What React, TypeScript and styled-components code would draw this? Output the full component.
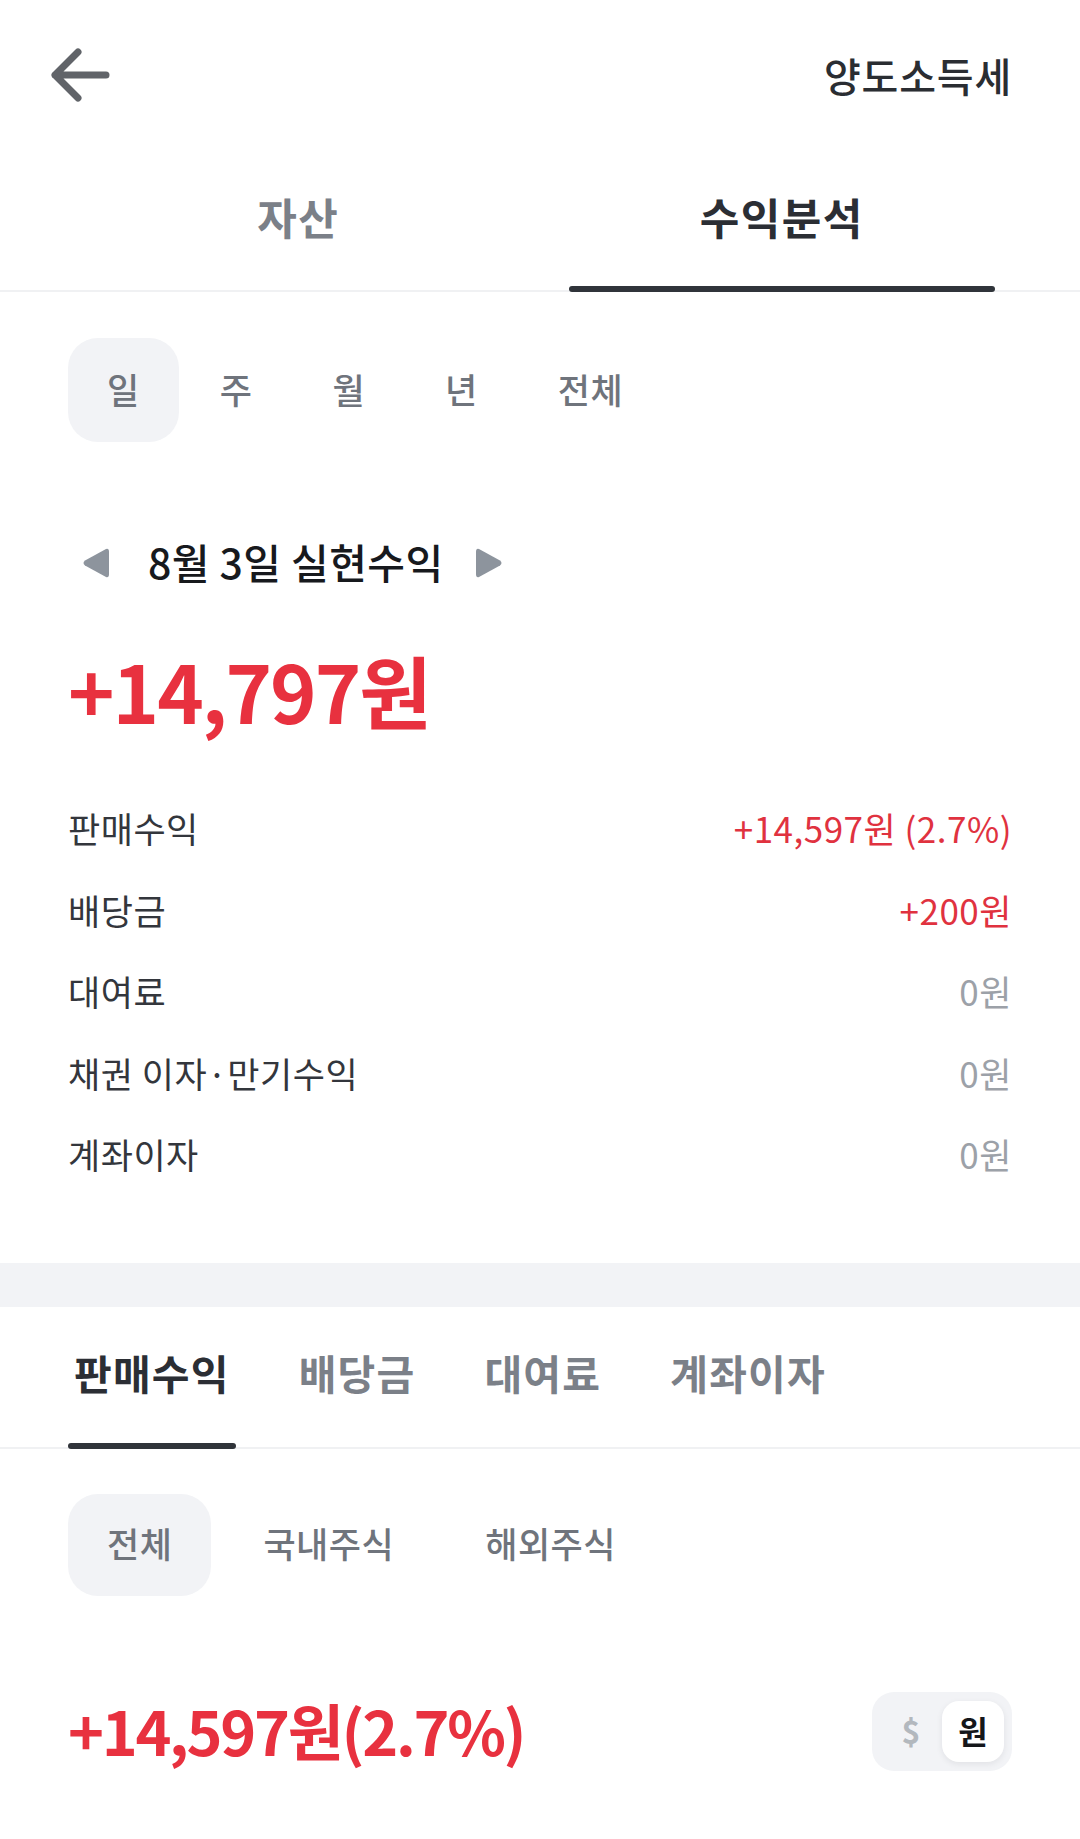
import React, { useState } from 'react';
import styled, { createGlobalStyle } from 'styled-components';

const GlobalStyle = createGlobalStyle`
  html, body {
    margin: 0;
    padding: 0;
    background: #ffffff;
  }
  body {
    font-family: "Noto Sans CJK KR", "Noto Sans", sans-serif;
    color: #191b1f;
  }
  * {
    box-sizing: border-box;
  }
`;

const Page = styled.div`
  width: 1080px;
  min-height: 1839px;
  background: #ffffff;
  overflow: hidden;
`;

const Header = styled.header`
  height: 150px;
  display: flex;
  align-items: center;
  justify-content: space-between;
  padding: 0 68px 0 50px;
`;

const BackButton = styled.button`
  border: 0;
  background: none;
  padding: 0;
  width: 62px;
  height: 56px;
  display: flex;
  align-items: center;
  cursor: pointer;
`;

const HeaderAction = styled.span`
  font-size: 40px;
  font-weight: 500;
  letter-spacing: 0.8px;
  color: #2a2d32;
`;

const MainTabs = styled.nav`
  height: 142px;
  display: grid;
  grid-template-columns: 1fr 1fr;
  gap: 57px;
  padding: 0 85px;
  box-shadow: inset 0 -2px 0 #f0f1f3;
`;

const MainTab = styled.button<{ $active?: boolean }>`
  position: relative;
  border: 0;
  background: none;
  padding: 0 0 10px;
  display: flex;
  align-items: center;
  justify-content: center;
  font-family: inherit;
  font-size: 43px;
  font-weight: 700;
  letter-spacing: 1.5px;
  color: ${(p) => (p.$active ? '#2b2e34' : '#7b8088')};
  cursor: pointer;

  &::after {
    content: '';
    position: absolute;
    left: 0;
    right: 0;
    bottom: 0;
    height: 6px;
    border-radius: 3px;
    background: ${(p) => (p.$active ? '#30343a' : 'transparent')};
  }
`;

const Segment = styled.div<{ $gap: number; $top: number }>`
  display: flex;
  gap: ${(p) => p.$gap}px;
  padding: 0 68px;
  margin-top: ${(p) => p.$top}px;
`;

const SegmentItem = styled.button<{ $active?: boolean; $pad: number; $height: number }>`
  height: ${(p) => p.$height}px;
  padding: 0 ${(p) => p.$pad}px 4px;
  border: 0;
  border-radius: 30px;
  background: ${(p) => (p.$active ? '#f2f3f6' : 'transparent')};
  font-family: inherit;
  font-size: 35px;
  font-weight: 500;
  letter-spacing: 0.5px;
  color: #6f747c;
  cursor: pointer;
`;

const DateRow = styled.div`
  display: flex;
  align-items: center;
  padding: 0 0 0 80px;
  margin-top: 98px;
  height: 46px;
`;

const ArrowButton = styled.button`
  border: 0;
  background: none;
  padding: 0;
  width: 31px;
  height: 34px;
  display: flex;
  cursor: pointer;
`;

const DateTitle = styled.h2`
  margin: 0 30px 0 37px;
  font-size: 41px;
  font-weight: 500;
  letter-spacing: 0.4px;
  color: #17191d;
  line-height: 1;
  padding-bottom: 4px;
`;

const BigAmount = styled.div`
  margin-top: 58px;
  padding: 0 68px;
  font-size: 79px;
  font-weight: 700;
  letter-spacing: -2px;
  line-height: 92px;
  color: #e8313f;
`;

const Breakdown = styled.ul`
  list-style: none;
  margin: 51px 0 0;
  padding: 0 68px 68px;
`;

const BreakdownRow = styled.li`
  height: 81.5px;
  display: flex;
  align-items: center;
  justify-content: space-between;
  font-size: 35px;
  letter-spacing: 0.5px;
`;

const RowLabel = styled.span`
  color: #33363c;
  font-weight: 400;
`;

const RowValue = styled.span<{ $tone: 'plus' | 'zero' }>`
  color: ${(p) => (p.$tone === 'plus' ? '#e0323f' : '#9ca1a8')};
  font-weight: 400;
`;

const SectionGap = styled.div`
  height: 44px;
  background: #f2f3f6;
`;

const SubTabs = styled.nav`
  height: 142px;
  display: flex;
  gap: 57px;
  padding: 0 68px;
  box-shadow: inset 0 -2px 0 #f0f1f3;
`;

const SubTab = styled.button<{ $active?: boolean }>`
  position: relative;
  border: 0;
  background: none;
  padding: 0 6px 12px;
  display: flex;
  align-items: center;
  font-family: inherit;
  font-size: 41px;
  font-weight: 700;
  letter-spacing: 1.2px;
  color: ${(p) => (p.$active ? '#2b2e34' : '#7b8088')};
  cursor: pointer;

  &::after {
    content: '';
    position: absolute;
    left: 0;
    right: 0;
    bottom: 0;
    height: 6px;
    border-radius: 3px;
    background: ${(p) => (p.$active ? '#30343a' : 'transparent')};
  }
`;

const TotalRow = styled.div`
  display: flex;
  align-items: center;
  justify-content: space-between;
  padding: 0 68px;
  margin-top: 96px;
  height: 79px;
`;

const TotalAmount = styled.div`
  font-size: 61px;
  font-weight: 700;
  letter-spacing: -2.3px;
  color: #e8313f;
  padding-bottom: 4px;
`;

const CurrencyToggle = styled.div`
  width: 140px;
  height: 79px;
  padding: 9px 8px;
  display: grid;
  grid-template-columns: 1fr 1fr;
  border-radius: 22px;
  background: #f2f3f6;
`;

const CurrencyOption = styled.button<{ $active?: boolean }>`
  border: 0;
  border-radius: 17px;
  padding: 0 0 3px;
  background: ${(p) => (p.$active ? '#ffffff' : 'transparent')};
  box-shadow: ${(p) => (p.$active ? '0 2px 6px rgba(20, 24, 32, 0.08)' : 'none')};
  font-family: inherit;
  font-size: 32px;
  font-weight: 700;
  color: ${(p) => (p.$active ? '#15171b' : '#b3b8be')};
  cursor: pointer;
`;

const BackIcon = () => (
  <svg width="62" height="56" viewBox="0 0 62 56">
    <path
      d="M28 5 L5 28 L28 51 M5 28 H56"
      fill="none"
      stroke="#616469"
      strokeWidth="7"
      strokeLinecap="round"
      strokeLinejoin="round"
    />
  </svg>
);

const Triangle = ({ dir }: { dir: 'left' | 'right' }) => (
  <svg width="31" height="34" viewBox="0 0 31 34">
    <path
      d={
        dir === 'left'
          ? 'M26 3 Q29 2 29 6 L29 28 Q29 32 26 31 L5 19.5 Q2 17 5 14.5 Z'
          : 'M5 3 Q2 2 2 6 L2 28 Q2 32 5 31 L26 19.5 Q29 17 26 14.5 Z'
      }
      fill="#8d949d"
    />
  </svg>
);

const periods = ['일', '주', '월', '년', '전체'];
const markets = ['전체', '국내주식', '해외주식'];
const subTabs = ['판매수익', '배당금', '대여료', '계좌이자'];

const breakdown: { label: string; value: string; tone: 'plus' | 'zero' }[] = [
  { label: '판매수익', value: '+14,597원 (2.7%)', tone: 'plus' },
  { label: '배당금', value: '+200원', tone: 'plus' },
  { label: '대여료', value: '0원', tone: 'zero' },
  { label: '채권 이자·만기수익', value: '0원', tone: 'zero' },
  { label: '계좌이자', value: '0원', tone: 'zero' },
];

export default function App() {
  const [mainTab, setMainTab] = useState(1);
  const [period, setPeriod] = useState(0);
  const [subTab, setSubTab] = useState(0);
  const [market, setMarket] = useState(0);
  const [currency, setCurrency] = useState<'usd' | 'krw'>('krw');

  return (
    <Page>
      <GlobalStyle />
      <Header>
        <BackButton aria-label="뒤로">
          <BackIcon />
        </BackButton>
        <HeaderAction>양도소득세</HeaderAction>
      </Header>

      <MainTabs>
        {['자산', '수익분석'].map((t, i) => (
          <MainTab key={t} $active={mainTab === i} onClick={() => setMainTab(i)}>
            {t}
          </MainTab>
        ))}
      </MainTabs>

      <Segment $gap={2} $top={46}>
        {periods.map((p, i) => (
          <SegmentItem
            key={p}
            $pad={39}
            $height={104}
            $active={period === i}
            onClick={() => setPeriod(i)}
          >
            {p}
          </SegmentItem>
        ))}
      </Segment>

      <DateRow>
        <ArrowButton aria-label="이전">
          <Triangle dir="left" />
        </ArrowButton>
        <DateTitle>8월 3일 실현수익</DateTitle>
        <ArrowButton aria-label="다음">
          <Triangle dir="right" />
        </ArrowButton>
      </DateRow>

      <BigAmount>+14,797원</BigAmount>

      <Breakdown>
        {breakdown.map((r) => (
          <BreakdownRow key={r.label}>
            <RowLabel>{r.label}</RowLabel>
            <RowValue $tone={r.tone}>{r.value}</RowValue>
          </BreakdownRow>
        ))}
      </Breakdown>

      <SectionGap />

      <SubTabs>
        {subTabs.map((t, i) => (
          <SubTab key={t} $active={subTab === i} onClick={() => setSubTab(i)}>
            {t}
          </SubTab>
        ))}
      </SubTabs>

      <Segment $gap={13} $top={45}>
        {markets.map((m, i) => (
          <SegmentItem
            key={m}
            $pad={39}
            $height={102}
            $active={market === i}
            onClick={() => setMarket(i)}
          >
            {m}
          </SegmentItem>
        ))}
      </Segment>

      <TotalRow>
        <TotalAmount>+14,597원(2.7%)</TotalAmount>
        <CurrencyToggle>
          <CurrencyOption $active={currency === 'usd'} onClick={() => setCurrency('usd')}>
            $
          </CurrencyOption>
          <CurrencyOption $active={currency === 'krw'} onClick={() => setCurrency('krw')}>
            원
          </CurrencyOption>
        </CurrencyToggle>
      </TotalRow>
    </Page>
  );
}
